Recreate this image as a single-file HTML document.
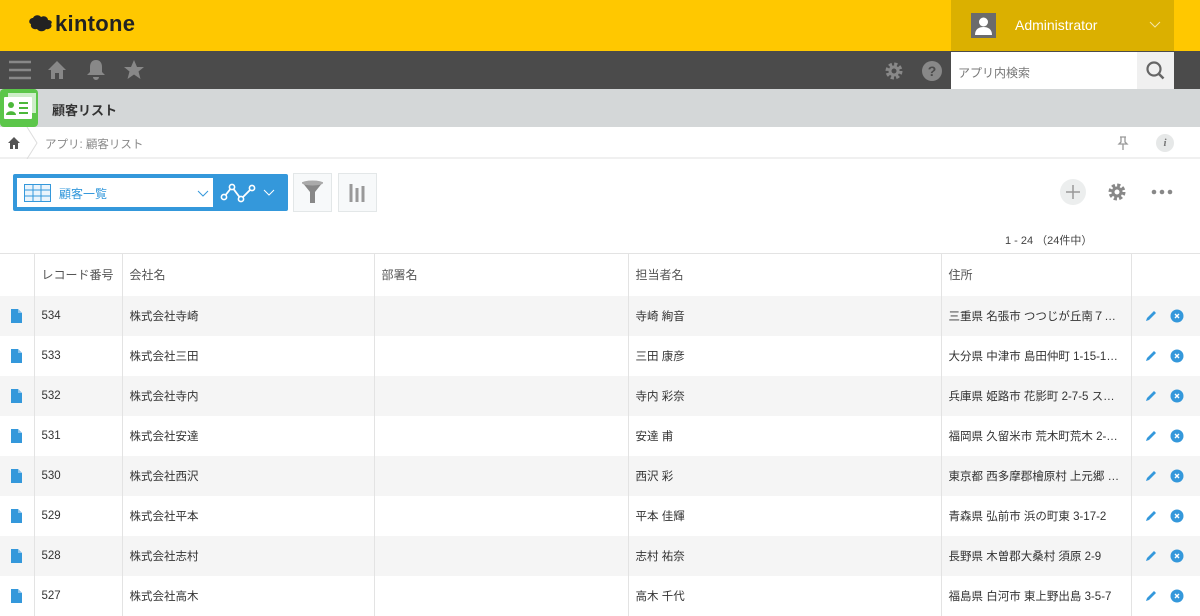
<!DOCTYPE html>
<html><head><meta charset="utf-8"><style>
*{box-sizing:border-box;margin:0;padding:0}
body{width:1200px;height:608px;overflow:hidden;background:#fff;font-family:"Liberation Sans","Noto Sans CJK JP",sans-serif;color:#333;position:relative}
.abs{position:absolute}
.top{left:0;top:0;width:1200px;height:51px;background:#ffc800}
.user{left:951px;top:0;width:223px;height:51px;background:#dbb000;color:#fff;font-size:14px}
.nav{left:0;top:51px;width:1200px;height:38px;background:#4b4b4b}
.apphd{left:0;top:89px;width:1200px;height:38px;background:#d4d7d8}
.bc{left:0;top:127px;width:1200px;height:32px;background:#fff;border-bottom:2px solid #f0f0f0}
table{position:absolute;left:0;top:253px;border-collapse:collapse;font-size:11.5px;color:#333}
td{border-left:1px solid #e3e3e3;height:40px;padding-left:7px;white-space:nowrap;vertical-align:middle}
tr.h td{height:42px;color:#555;border-top:1px solid #e3e3e3;font-size:12px}
tr:nth-child(even) td{background:#f5f5f5}
td:first-child{border-left:none}
</style></head><body>
<div class="abs top"></div>
<div class="abs" style="left:28px;top:14px">
<svg width="26" height="20" viewBox="0 0 26 20"><path d="M3 10c-3-1-2-6 2-6 1-3 6-4 8-1 3-2 7 0 7 3 3 0 5 2 3 4 2 3-2 6-5 5-2 3-7 3-9 0-4 1-7-2-6-5z" fill="#222"/></svg>
<span style="position:absolute;left:27px;top:-3px;font-size:22px;font-weight:bold;color:#222;letter-spacing:0.3px">kintone</span></div>
<div class="abs user">
<div class="abs" style="left:20px;top:13px;width:25px;height:25px;background:#6b6b6b"><svg width="25" height="25"><circle cx="12.5" cy="9" r="4.5" fill="#fff"/><path d="M4 22c0-6 4-8 8.5-8s8.5 2 8.5 8z" fill="#fff"/></svg></div>
<div class="abs" style="left:64px;top:17px">Administrator</div>
<svg class="abs" style="left:198px;top:21px" width="12" height="8"><path d="M1 1l5 5 5-5" stroke="#f5e6a8" fill="none"/></svg>
</div>
<div class="abs nav">
<svg class="abs" style="left:9px;top:9px" width="22" height="20"><path d="M0 2h22M0 10h22M0 18h22" stroke="#888" stroke-width="2.5"/></svg>
<svg class="abs" style="left:47px;top:9px" width="20" height="20"><path d="M10 1L1 10h3v9h4v-6h4v6h4v-9h3z" fill="#888"/></svg>
<svg class="abs" style="left:86px;top:8px" width="20" height="22"><path d="M10 1c-4 0-6 3-6 7v5l-3 3h18l-3-3V8c0-4-2-7-6-7zM7 18a3 3 0 006 0z" fill="#888"/></svg>
<svg class="abs" style="left:124px;top:9px" width="20" height="20"><path d="M10 0l3 7h7l-5.5 4.5 2 7.5L10 14.5 3.5 19l2-7.5L0 7h7z" fill="#888"/></svg>
<svg class="abs" style="left:884px;top:10px" width="20" height="20" viewBox="0 0 20 20"><circle cx="10" cy="10" r="6.5" fill="none" stroke="#888" stroke-width="4" stroke-dasharray="3 2.1"/><circle cx="10" cy="10" r="5.5" fill="#888"/><circle cx="10" cy="10" r="2.5" fill="#4b4b4b"/></svg>
<svg class="abs" style="left:922px;top:10px" width="20" height="20"><circle cx="10" cy="10" r="10" fill="#888"/><text x="10" y="15" text-anchor="middle" font-size="14" font-weight="bold" fill="#4b4b4b" font-family="Liberation Sans">?</text></svg>
<div class="abs" style="left:951px;top:1px;width:186px;height:37px;background:#fff;font-size:12px;color:#777;padding:12px 0 0 7px">アプリ内検索</div>
<div class="abs" style="left:1137px;top:1px;width:37px;height:37px;background:#f0f0f0"><svg width="37" height="37"><circle cx="17" cy="17" r="6.5" fill="none" stroke="#666" stroke-width="2.2"/><path d="M21.5 21.5l5 5" stroke="#666" stroke-width="2.5"/></svg></div>
</div>
<div class="abs apphd"><div class="abs" style="left:52px;top:11px;font-size:13px;font-weight:bold">顧客リスト</div></div>
<div class="abs" style="left:0;top:89px;width:38px;height:38px;background:#5cc64a;border-radius:4px">
<svg width="38" height="38"><rect x="8" y="4" width="28" height="20" fill="#fff" opacity=".7"/><rect x="4" y="8" width="28" height="22" rx="1" fill="#fff"/><circle cx="11" cy="16" r="3" fill="#4cb83a"/><path d="M6 26c0-5 10-5 10 0z" fill="#4cb83a"/><path d="M19 14h9M19 19h9M19 24h9" stroke="#4cb83a" stroke-width="2"/></svg></div>
<div class="abs bc">
<svg class="abs" style="left:8px;top:10px" width="12" height="12"><path d="M6 0L0 6h2v6h3V8h2v4h3V6h2z" fill="#555"/></svg>
<svg class="abs" style="left:26px;top:0" width="12" height="32"><path d="M1 0l10 16L1 32" stroke="#ddd" fill="none"/></svg>
<div class="abs" style="left:45px;top:9px;font-size:11.5px;color:#888">アプリ: 顧客リスト</div>
<svg class="abs" style="left:1117px;top:9px" width="12" height="14"><path d="M3 1h6M4 1v5l-2 2h8L8 6V1M6 8v6" stroke="#999" fill="none" stroke-width="1.3"/></svg>
<div class="abs" style="left:1156px;top:7px;width:18px;height:18px;border-radius:50%;background:#e6e8e8;font:italic bold 11px 'Liberation Serif',serif;color:#777;text-align:center;line-height:18px">i</div>
</div>
<div class="abs" style="left:13px;top:174px;width:275px;height:37px;background:#3498db;border-radius:2px">
<div class="abs" style="left:4px;top:4px;width:196px;height:29px;background:#fff">
<svg class="abs" style="left:7px;top:6px" width="27" height="18"><rect x=".5" y=".5" width="26" height="17" fill="#eaf4fc" stroke="#3498db"/><path d="M1 6h25M1 12h25M9 1v16M17 1v16" stroke="#3498db"/></svg>
<div class="abs" style="left:42px;top:7px;font-size:12px;color:#3498db">顧客一覧</div>
<svg class="abs" style="left:180px;top:12px" width="12" height="8"><path d="M1 1l5 5 5-5" stroke="#3498db" fill="none"/></svg></div>
<svg class="abs" style="left:207px;top:8px" width="36" height="22"><path d="M4 15l8-10 9 12 11-11" stroke="#fff" stroke-width="1.8" fill="none"/><g fill="#3498db" stroke="#fff" stroke-width="1.6"><circle cx="4" cy="15" r="2.6"/><circle cx="12" cy="5" r="2.6"/><circle cx="21" cy="17" r="2.6"/><circle cx="32" cy="6" r="2.6"/></g></svg>
<svg class="abs" style="left:250px;top:15px" width="12" height="8"><path d="M1 1l5 5 5-5" stroke="#fff" fill="none"/></svg>
</div>
<div class="abs" style="left:293px;top:173px;width:39px;height:39px;background:#f7f9fa;border:1px solid #e3e7e8">
<svg width="37" height="37"><path d="M8 8h21l-8 10v11h-5V18z" fill="#888"/><ellipse cx="18.5" cy="9" rx="10.5" ry="2.5" fill="#aaa"/></svg></div>
<div class="abs" style="left:338px;top:173px;width:39px;height:39px;background:#f7f9fa;border:1px solid #e3e7e8">
<svg width="37" height="37"><path d="M12 10v18M18 14v14M24 12v16" stroke="#999" stroke-width="3"/></svg></div>
<div class="abs" style="left:1060px;top:179px;width:26px;height:26px;border-radius:50%;background:#eceeee"><svg width="26" height="26"><path d="M13 6v14M6 13h14" stroke="#999" stroke-width="1.5"/></svg></div>
<svg class="abs" style="left:1107px;top:182px" width="20" height="20" viewBox="0 0 20 20"><circle cx="10" cy="10" r="6.5" fill="none" stroke="#888" stroke-width="4" stroke-dasharray="3 2.1"/><circle cx="10" cy="10" r="5.5" fill="#888"/><circle cx="10" cy="10" r="2.5" fill="#fff"/></svg>
<svg class="abs" style="left:1151px;top:189px" width="22" height="6"><circle cx="3" cy="3" r="2.3" fill="#888"/><circle cx="11" cy="3" r="2.3" fill="#888"/><circle cx="19" cy="3" r="2.3" fill="#888"/></svg>
<div class="abs" style="left:1005px;top:232px;font-size:11px;color:#444">1 - 24 （24件中）</div>
<table>
<colgroup><col style="width:34px"><col style="width:88px"><col style="width:252px"><col style="width:254px"><col style="width:313px"><col style="width:190px"><col style="width:69px"></colgroup>
<tr class="h"><td></td><td>レコード番号</td><td>会社名</td><td>部署名</td><td>担当者名</td><td>住所</td><td></td></tr>
<tr><td>D</td><td>534</td><td>株式会社寺崎</td><td></td><td>寺崎 絢音</td><td>三重県 名張市 つつじが丘南７…</td><td>A</td></tr>
<tr><td>D</td><td>533</td><td>株式会社三田</td><td></td><td>三田 康彦</td><td>大分県 中津市 島田仲町 1-15-1…</td><td>A</td></tr>
<tr><td>D</td><td>532</td><td>株式会社寺内</td><td></td><td>寺内 彩奈</td><td>兵庫県 姫路市 花影町 2-7-5 ス…</td><td>A</td></tr>
<tr><td>D</td><td>531</td><td>株式会社安達</td><td></td><td>安達 甫</td><td>福岡県 久留米市 荒木町荒木 2-…</td><td>A</td></tr>
<tr><td>D</td><td>530</td><td>株式会社西沢</td><td></td><td>西沢 彩</td><td>東京都 西多摩郡檜原村 上元郷 …</td><td>A</td></tr>
<tr><td>D</td><td>529</td><td>株式会社平本</td><td></td><td>平本 佳輝</td><td>青森県 弘前市 浜の町東 3-17-2</td><td>A</td></tr>
<tr><td>D</td><td>528</td><td>株式会社志村</td><td></td><td>志村 祐奈</td><td>長野県 木曽郡大桑村 須原 2-9</td><td>A</td></tr>
<tr><td>D</td><td>527</td><td>株式会社高木</td><td></td><td>高木 千代</td><td>福島県 白河市 東上野出島 3-5-7</td><td>A</td></tr>
</table>
<script>
document.querySelectorAll('td').forEach(function(t){
if(t.textContent==='D'){t.innerHTML='<svg width="12" height="14" style="margin-left:3px;vertical-align:middle"><path d="M1 0h7l4 4v10H1z" fill="#3498db"/><path d="M8 0v4h4" fill="#8cc4ec"/></svg>';}
if(t.textContent==='A'){t.innerHTML='<svg width="14" height="14" style="margin-left:5px;vertical-align:middle"><path d="M2 12l1-3 7-7 2 2-7 7z" fill="#3498db"/></svg><svg width="14" height="14" style="margin-left:12px;vertical-align:middle"><circle cx="7" cy="7" r="6.5" fill="#3498db"/><path d="M5 5l4 4M9 5l-4 4" stroke="#fff" stroke-width="1.4"/></svg>';}
});
</script>
</body></html>
